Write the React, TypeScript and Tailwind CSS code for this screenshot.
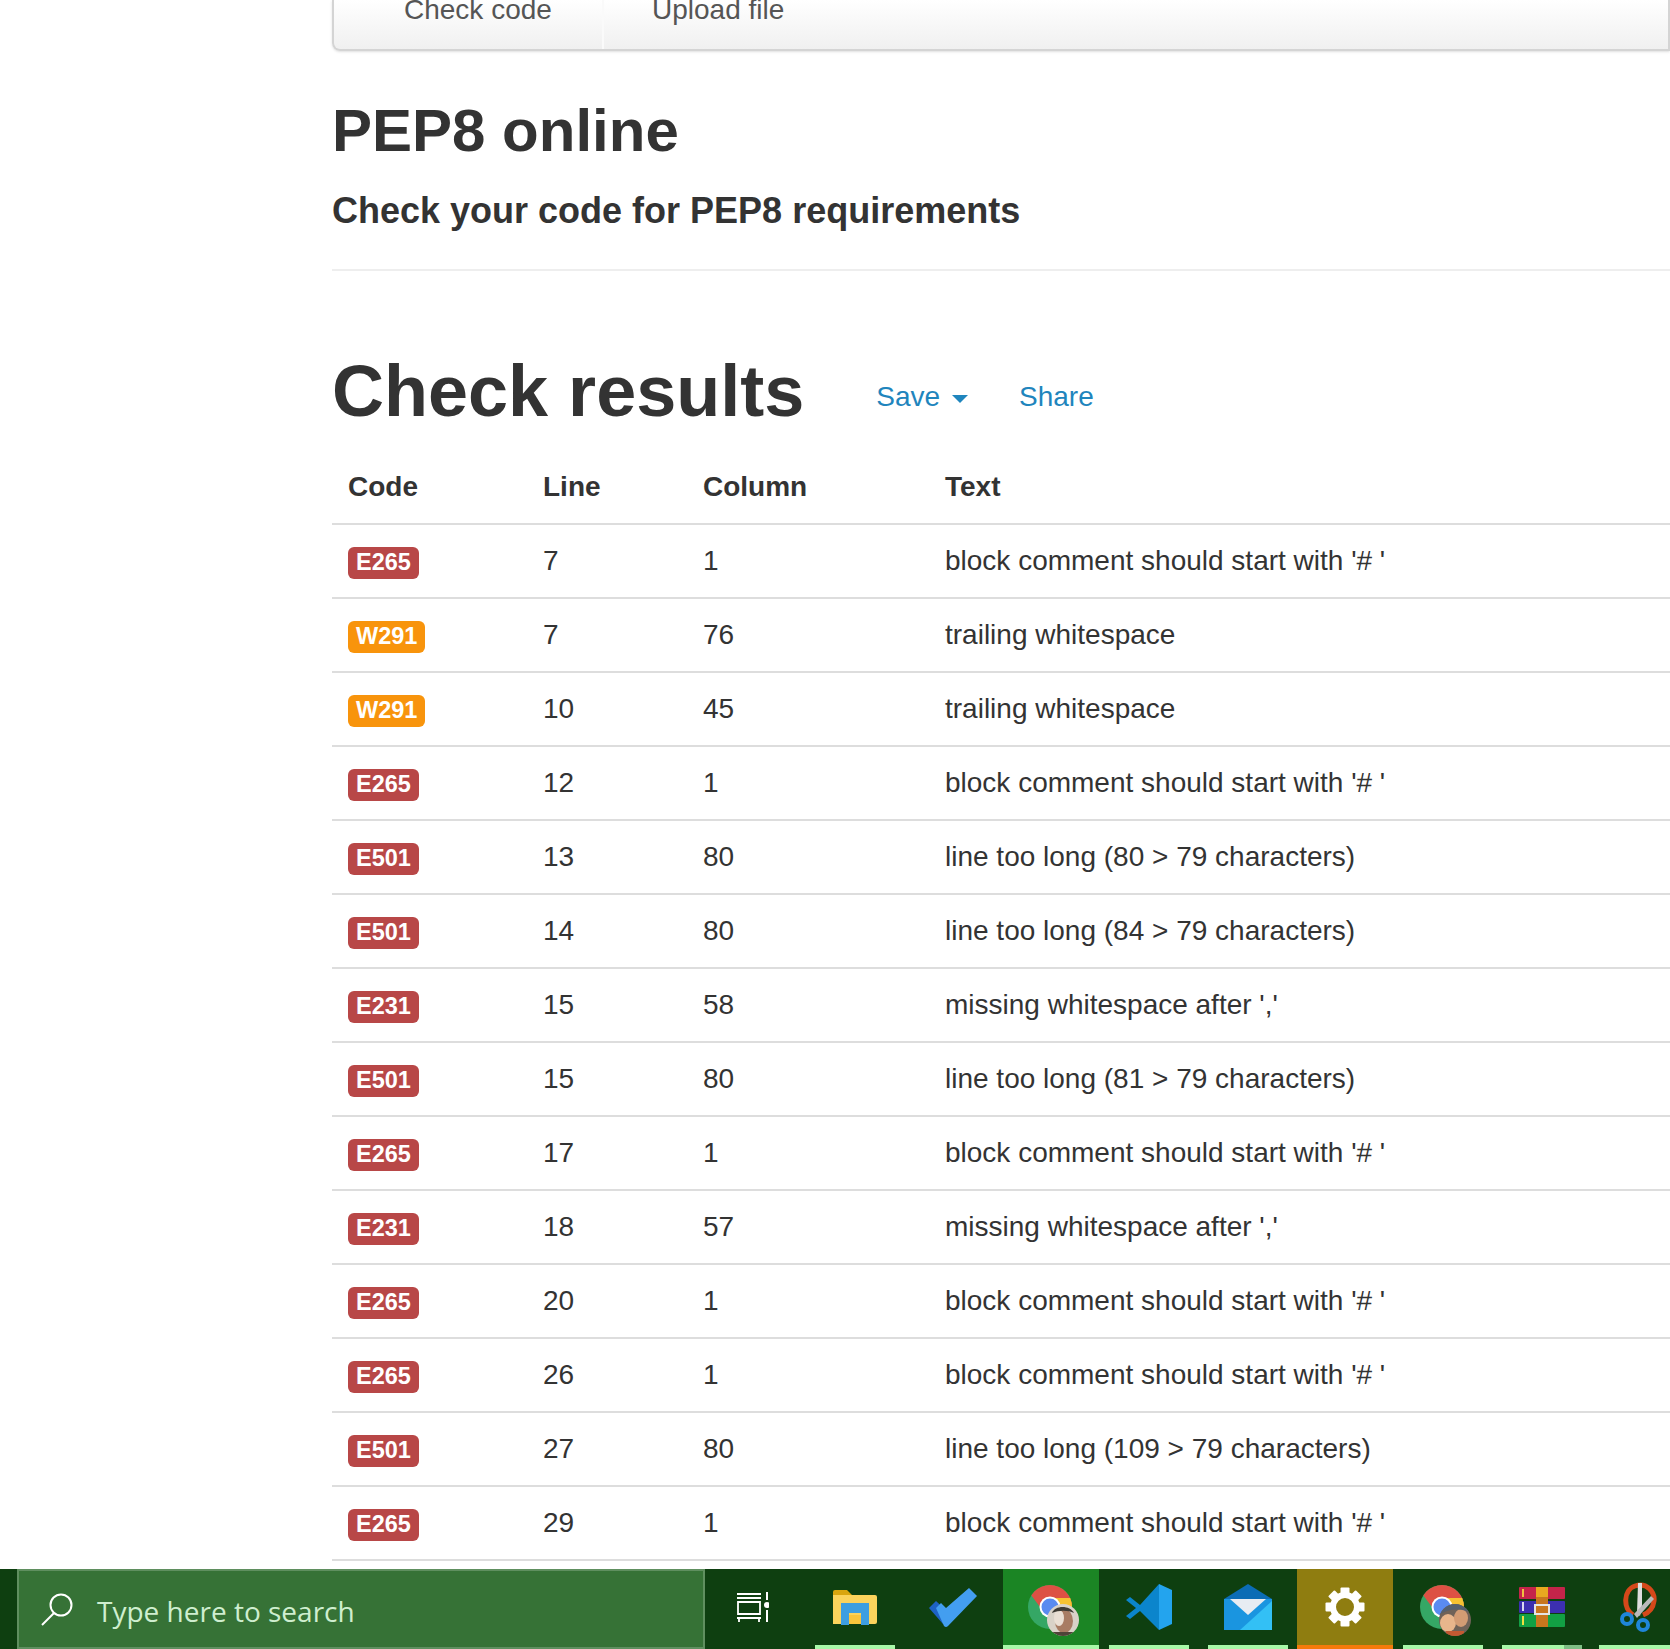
const results = [
  { code: "E265", line: 7, column: 1, text: "block comment should start with '# '" },
  { code: "W291", line: 7, column: 76, text: "trailing whitespace" },
  { code: "W291", line: 10, column: 45, text: "trailing whitespace" },
  { code: "E265", line: 12, column: 1, text: "block comment should start with '# '" },
  { code: "E501", line: 13, column: 80, text: "line too long (80 > 79 characters)" },
  { code: "E501", line: 14, column: 80, text: "line too long (84 > 79 characters)" },
  { code: "E231", line: 15, column: 58, text: "missing whitespace after ','" },
  { code: "E501", line: 15, column: 80, text: "line too long (81 > 79 characters)" },
  { code: "E265", line: 17, column: 1, text: "block comment should start with '# '" },
  { code: "E231", line: 18, column: 57, text: "missing whitespace after ','" },
  { code: "E265", line: 20, column: 1, text: "block comment should start with '# '" },
  { code: "E265", line: 26, column: 1, text: "block comment should start with '# '" },
  { code: "E501", line: 27, column: 80, text: "line too long (109 > 79 characters)" },
  { code: "E265", line: 29, column: 1, text: "block comment should start with '# '" },
];

const SearchIcon = () => (
  <svg width="34" height="34" viewBox="0 0 34 34" fill="none" stroke="#ffffff" strokeWidth="2" className="shrink-0">
    <circle cx="21" cy="13" r="10.5" />
    <path d="M14 21L2 33" />
  </svg>
);

const TaskViewIcon = () => (
  <svg width="34" height="34" viewBox="0 0 34 34" fill="none" stroke="#ffffff" strokeWidth="2">
    <path d="M2 4h24M2 8h24M3 12h22v12H3zM2 28h24M4 28v4M24 28v4" strokeWidth="1.8" />
    <path d="M32 2v8M32 20v12" />
    <circle cx="32" cy="15" r="3" fill="#ffffff" stroke="none" />
  </svg>
);

const ExplorerIcon = () => (
  <svg width="44" height="36" viewBox="0 0 44 36">
    <path d="M0 3a2 2 0 0 1 2-2h12l5 5h-19z" fill="#d9a50f" />
    <path d="M0 6h42a2 2 0 0 1 2 2v25a2 2 0 0 1-2 2h-42z" fill="#fbd35c" />
    <path d="M8 14h28v22h-8v-12h-12v12h-8z" fill="#3d9ee0" />
    <path d="M16 26h12v9h-12z" fill="#f8c43c" />
  </svg>
);

const TodoIcon = () => (
  <svg width="50" height="40" viewBox="0 0 50 40">
    <path d="M1 21l7-7 13 12-6 11z" fill="#1e62c4" />
    <path d="M8 21l5-5 5 5L41 1l8 8-29 30a3 3 0 0 1-4 0z" fill="#439ef0" />
  </svg>
);

// chrome badge with the profile photo on top of it
const ChromeIcon = ({ warm }: { warm?: boolean }) => (
  <svg width="52" height="52" viewBox="0 0 52 52" className="mt-[8px] ml-[6px]">
    <defs>
      <clipPath id={warm ? "chromeWarm" : "chromeCool"}>
        <circle cx="22" cy="22" r="22" />
      </clipPath>
      <clipPath id={warm ? "photoWarm" : "photoCool"}>
        <circle cx="35" cy="35" r="16" />
      </clipPath>
    </defs>
    <g clipPath={`url(#${warm ? "chromeWarm" : "chromeCool"})`}>
      <rect x="0" y="0" width="44" height="44" fill="#35a765" />
      <path d="M3 10L18 30 44 21V0H3z" fill="#dd5144" />
      <path d="M22 13h22v14H28z" fill="#f6c231" />
    </g>
    <circle cx="22" cy="22" r="10.5" fill="#ffffff" />
    <circle cx="22" cy="22" r="8.5" fill="#5a8bf0" />
    {warm ? (
      <g clipPath="url(#photoWarm)">
        <rect x="19" y="19" width="32" height="32" fill="#6f6258" />
        <ellipse cx="28" cy="38" rx="8" ry="9" fill="#e8b68c" />
        <ellipse cx="41" cy="33" rx="7" ry="9" fill="#d39c74" />
        <path d="M19 19h32v9c-8-5-22-5-32 2z" fill="#55606e" />
        <path d="M26 46h18v5h-18z" fill="#c25a32" />
      </g>
    ) : (
      <g clipPath="url(#photoCool)">
        <rect x="19" y="19" width="32" height="32" fill="#d9d2c8" />
        <ellipse cx="36" cy="36" rx="9" ry="12" fill="#a87c64" />
        <ellipse cx="31" cy="33" rx="5" ry="8" fill="#eadfd4" />
        <path d="M24 28c3-8 18-8 22 0-6-3-15-3-22 0z" fill="#3f3b34" />
        <path d="M19 47h32v4h-32z" fill="#4f4438" />
      </g>
    )}
  </svg>
);

const VsCodeIcon = () => (
  <svg width="48" height="48" viewBox="0 0 48 48">
    <path d="M34 1L15 22 5 14 1 17l10 8L1 33l4 3 10-8 19 19 2-10V10z" fill="#0b85cc" />
    <path d="M34 1l13 6v34l-13 6z" fill="#23a4ee" />
  </svg>
);

const MailIcon = () => (
  <svg width="48" height="46" viewBox="0 0 48 46">
    <path d="M24 0L0 15v4h48v-4z" fill="#0b6cb5" />
    <rect x="0" y="15" width="48" height="31" fill="#1a95e0" />
    <path d="M6 15h36L24 31z" fill="#e7ecf2" />
    <path d="M48 17v29H16z" fill="#33c0f5" />
  </svg>
);

const GearIcon = () => (
  <svg width="40" height="40" viewBox="0 0 40 40">
    {[0, 45, 90, 135, 180, 225, 270, 315].map((deg) => (
      <rect key={deg} x="15.5" y="0.5" width="9" height="9" rx="1" fill="#ffffff" transform={`rotate(${deg} 20 20)`} />
    ))}
    <circle cx="20" cy="20" r="12" fill="none" stroke="#ffffff" strokeWidth="6" />
  </svg>
);

const WinrarIcon = () => (
  <svg width="48" height="40" viewBox="0 0 48 40">
    <rect x="1" y="0" width="46" height="12" rx="1" fill="#c4244a" />
    <rect x="1" y="14" width="46" height="12" rx="1" fill="#3c2fb0" />
    <rect x="1" y="27" width="46" height="13" rx="1" fill="#12a044" />
    <rect x="4" y="2" width="2" height="8" fill="#f0c040" />
    <rect x="4" y="15" width="2" height="9" fill="#d8d8f0" />
    <rect x="4" y="29" width="2" height="9" fill="#f0e040" />
    <rect x="18" y="0" width="12" height="40" fill="#c8761e" />
    <rect x="18" y="0" width="12" height="10" fill="#e8a820" />
    <rect x="17" y="18" width="14" height="9" fill="none" stroke="#e4e4e4" strokeWidth="2" />
  </svg>
);

const SnipIcon = () => (
  <svg width="40" height="50" viewBox="0 0 40 50">
    <path d="M14 33C4 27 4 8 16 4c12-4 20 6 19 15-1 8-6 12-11 14" fill="none" stroke="#d5481a" strokeWidth="5" />
    <path d="M19 1h4v22l-2 11-3-3z" fill="#dedede" />
    <path d="M32 14l3 3-17 19-3-4z" fill="#b9b9b9" />
    <circle cx="8" cy="37" r="5" fill="none" stroke="#1f86d8" strokeWidth="4" />
    <circle cx="24" cy="43" r="5" fill="none" stroke="#1f86d8" strokeWidth="4" />
  </svg>
);

const TaskbarSlot = ({ width, bar, barWidth, bg, children }: { width: string; bar?: string; barWidth?: string; bg?: string; children: React.ReactNode }) => (
  <div className={`flex flex-col items-center shrink-0 ${width} ${bg ?? ""}`}>
    <div className="flex-1 flex items-center justify-center">{children}</div>
    <div className={`h-1 ${barWidth ?? "w-20"} ${bar ?? ""}`}></div>
  </div>
);

const Taskbar = () => (
  <div className="h-20 shrink-0 flex bg-[#0e3f10] overflow-hidden">
    <div className="ml-[17px] w-[688px] shrink-0 flex items-center gap-[23px] pl-[21px] bg-[#367236] border-2 border-[#5f8f5f] text-[28px] text-[#cfeecf] [font-family:'Open_Sans',sans-serif]">
      <SearchIcon />
      <span className="pt-1">Type here to search</span>
    </div>
    <TaskbarSlot width="w-[102px]"><div className="mr-2"><TaskViewIcon /></div></TaskbarSlot>
    <TaskbarSlot width="w-[96px]" bar="bg-[#a8f8a8]"><ExplorerIcon /></TaskbarSlot>
    <TaskbarSlot width="w-[100px]"><TodoIcon /></TaskbarSlot>
    <TaskbarSlot width="w-[96px]" bg="bg-[#1b8524]" bar="bg-[#a8f8a8]" barWidth="w-full"><ChromeIcon /></TaskbarSlot>
    <TaskbarSlot width="w-[100px]" bar="bg-[#a8f8a8]"><VsCodeIcon /></TaskbarSlot>
    <TaskbarSlot width="w-[98px]" bar="bg-[#a8f8a8]"><MailIcon /></TaskbarSlot>
    <TaskbarSlot width="w-[96px]" bg="bg-[#8f7d10]" bar="bg-[#f57a0a]" barWidth="w-full"><GearIcon /></TaskbarSlot>
    <TaskbarSlot width="w-[100px]" bar="bg-[#a8f8a8]"><ChromeIcon warm /></TaskbarSlot>
    <TaskbarSlot width="w-[98px]" bar="bg-[linear-gradient(to_right,#a8f8a8_78%,#7fbf85_78%)]"><WinrarIcon /></TaskbarSlot>
    <TaskbarSlot width="w-[96px]" bar="bg-[#a8f8a8]"><SnipIcon /></TaskbarSlot>
  </div>
);

const ResultRow = ({ row }: { row: (typeof results)[number] }) => (
  <tr className="h-[74px] border-b-2 border-[#dddddd]">
    <td className="pl-4">
      <span
        className={`inline-block rounded-md px-2 h-8 leading-[30px] text-[23.5px] font-bold text-white align-middle ${
          row.code[0] === "W" ? "bg-[#f8940c]" : "bg-[#b84747]"
        }`}
      >
        {row.code}
      </span>
    </td>
    <td className="pl-4">{row.line}</td>
    <td className="pl-4">{row.column}</td>
    <td className="pl-4">{row.text}</td>
  </tr>
);

export default function App() {
  return (
    <div className="h-[1649px] flex flex-col overflow-hidden bg-white text-[#333333] text-[28px] [font-family:'Liberation_Sans',Arial,sans-serif]">
      <main className="flex-1 min-h-0 pl-[332px] overflow-hidden">
        <nav className="h-[51px] flex border-2 border-t-0 border-[#d4d4d4] rounded-bl-lg bg-gradient-to-b from-white to-[#f0f0f0] text-[#555555] shadow-sm">
          <a className="w-[270px] pl-[70px] leading-[20px] border-r-2 border-[#fafafa]">Check code</a>
          <a className="pl-[48px] leading-[20px]">Upload file</a>
        </nav>

        <h2 className="mt-[47px] text-[60px] leading-[66px] font-bold">PEP8 online</h2>
        <h3 className="mt-[27px] text-[36px] leading-[40px] font-bold">Check your code for PEP8 requirements</h3>
        <hr className="mt-[38px] border-0 h-[2px] bg-[#eeeeee]" />

        <div className="mt-[80px] flex items-start">
          <h1 className="text-[72px] leading-[80px] font-bold">Check results</h1>
          <a className="mt-[25px] ml-[72px] text-[#1f85bd] inline-flex items-center gap-3">
            Save
            <span className="mt-1 border-x-[8px] border-x-transparent border-t-[8px] border-t-[#1f85bd]"></span>
          </a>
          <a className="mt-[25px] ml-[51px] text-[#1f85bd]">Share</a>
        </div>

        <table className="mt-[19px] w-full table-fixed border-collapse">
          <thead>
            <tr className="h-[74px] border-b-2 border-[#dddddd] text-left">
              <th className="w-[195px] pl-4">Code</th>
              <th className="w-[160px] pl-4">Line</th>
              <th className="w-[242px] pl-4">Column</th>
              <th className="pl-4">Text</th>
            </tr>
          </thead>
          <tbody>
            {results.map((row, i) => (
              <ResultRow key={i} row={row} />
            ))}
          </tbody>
        </table>
      </main>
      <Taskbar />
    </div>
  );
}
